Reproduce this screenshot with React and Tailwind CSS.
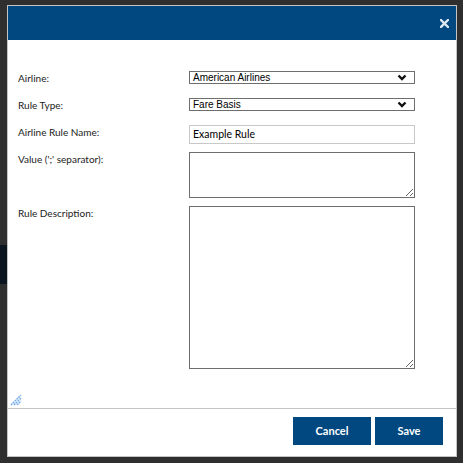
import React from 'react';

function Chevron() {
  return (
    <svg width="10" height="7" viewBox="0 0 10 7" className="shrink-0">
      <polyline points="1.5,1.5 5,5 8.5,1.5" fill="none" stroke="#111" strokeWidth="2.4" />
    </svg>
  );
}

function SelectBox({ value }) {
  return (
    <div className="flex h-[13px] w-[226px] items-center justify-between border border-[#6e6e6e] bg-white pl-[3px] pr-[7px] font-['Liberation_Sans',Arial,sans-serif] text-[10px] leading-none text-black">
      <span>{value}</span>
      <Chevron />
    </div>
  );
}

function Row({ label, children, className = '' }) {
  return (
    <div className={`flex ${className}`}>
      <div className="w-[171px] pt-[1px] text-[10px] leading-[12px] text-[#222]">{label}</div>
      {children}
    </div>
  );
}

export default function App() {
  return (
    <div className="relative h-[463px] w-[463px] overflow-hidden bg-[#2f2f2f] pl-[7px] pt-[5px] font-['Lato',sans-serif]">
      {/* bit of the page behind the overlay */}
      <div className="absolute left-0 top-[245px] h-[39px] w-[7px] bg-[#0b1520]" />

      <div className="relative flex h-[452px] w-[450px] flex-col border border-[#c4c4c4] bg-white">
        {/* Header */}
        <div className="flex h-[34px] shrink-0 items-center justify-end bg-[#00487f] pr-[7px]">
          <svg width="9" height="9" viewBox="0 0 9 9">
            <path d="M1 1 L8 8 M8 1 L1 8" stroke="#dde7f1" strokeWidth="2.4" strokeLinecap="square" />
          </svg>
        </div>

        {/* Body */}
        <div className="relative flex flex-1 flex-col pl-[10px] pt-[31px]">
          <Row label="Airline:">
            <SelectBox value="American Airlines" />
          </Row>
          <Row label="Rule Type:" className="mt-[14px]">
            <SelectBox value="Fare Basis" />
          </Row>
          <Row label="Airline Rule Name:" className="mt-[14px]">
            <div className="flex h-[19px] w-[226px] items-center border border-[#c8c8c8] pl-[3px] text-[10.5px] text-black">
              Example Rule
            </div>
          </Row>
          <Row label="Value (';' separator):" className="mt-[8px]">
            <textarea className="h-[46px] w-[226px] border border-[#6e6e6e] bg-white outline-none" />
          </Row>
          <Row label="Rule Description:" className="mt-[8px]">
            <textarea className="h-[163px] w-[226px] border border-[#6e6e6e] bg-white outline-none" />
          </Row>

          {/* resize grip */}
          <svg width="12" height="12" viewBox="0 0 12 12" className="absolute bottom-[2px] left-[2px]">
            <path d="M1 11 L11 1 M4 11 L11 4 M7 11 L11 7" stroke="#78aee6" strokeWidth="1.5" strokeDasharray="2 0.6" />
          </svg>
        </div>

        {/* Footer */}
        <div className="flex h-[48px] shrink-0 justify-end gap-[4px] border-t border-[#c4c4c4] pr-[13px] pt-[8px]">
          <button className="h-[28px] w-[78px] bg-[#00487f] text-[11px] font-bold text-white">Cancel</button>
          <button className="h-[28px] w-[68px] bg-[#00487f] text-[11px] font-bold text-white">Save</button>
        </div>
      </div>
    </div>
  );
}
